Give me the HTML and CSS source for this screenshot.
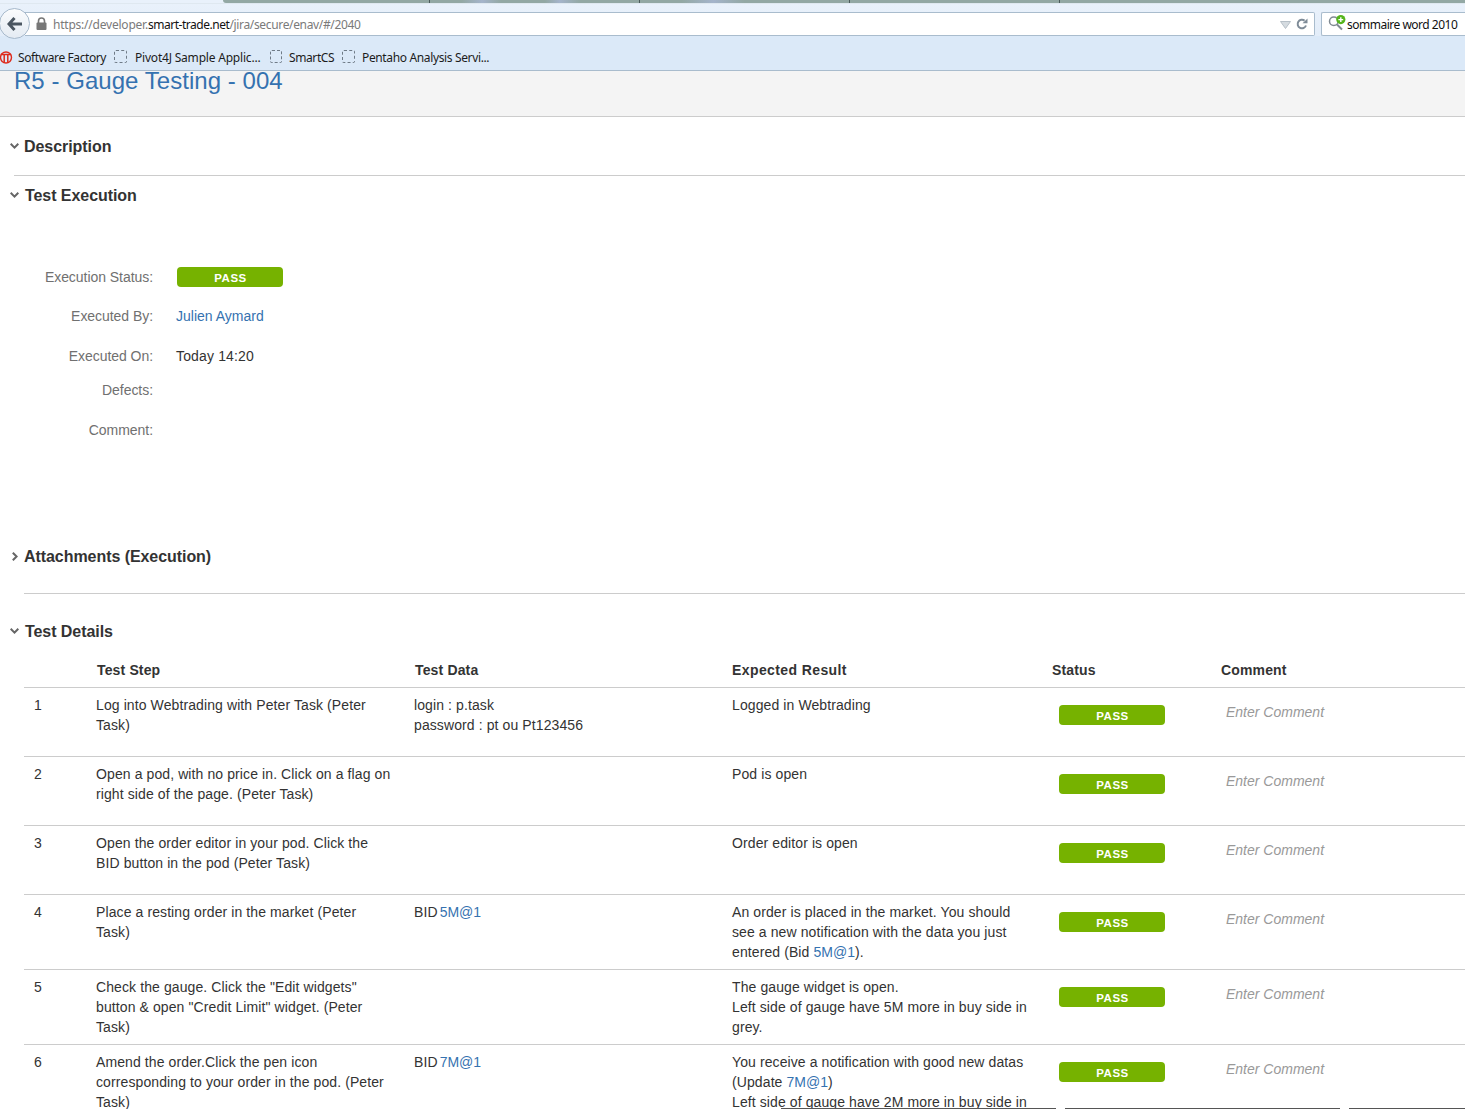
FILE: index.html
```html
<!DOCTYPE html>
<html lang="en">
<head>
<meta charset="utf-8">
<title>R5 - Gauge Testing - 004</title>
<link rel="stylesheet" href="styles.css">
</head>
<body>
<div class="chrome">
  <div class="tabstrip">
    <div class="tab tab-first"></div><div class="tab tab-glass-a"></div><div class="tab tab-glass-b"></div><div class="tab"></div><div class="tab tab-last"></div>
  </div>
  <div class="toolbar">
    <div class="back">
      <svg width="16" height="14" viewBox="0 0 16 14"><path d="M7.5 1 2 7l5.5 6M2.5 7H15" fill="none" stroke="#4b5661" stroke-width="3"/></svg>
    </div>
    <div class="urlbar">
      <svg class="lock" width="11" height="13" viewBox="0 0 11 13"><path d="M2.5 6V4a3 3 0 0 1 6 0v2" fill="none" stroke="#777" stroke-width="1.6"/><rect x="0.5" y="5.5" width="10" height="7.5" rx="1" fill="#777"/></svg>
      <span class="url"><span class="url-pre">https://developer.</span><b class="domain">smart-trade.net</b>/jira/secure/enav/#/2040</span>
      <svg class="drop" width="11" height="8" viewBox="0 0 11 8"><path d="M.5.5h10l-5 7z" fill="#d5dbe0" stroke="#b6bfc7"/></svg>
      <svg class="reload" width="12" height="12" viewBox="0 0 12 12"><path d="M10 7.5A4.3 4.3 0 1 1 8.6 2.6" fill="none" stroke="#7e8b97" stroke-width="2"/><path d="M6.5 5.2h5V.4z" fill="#7e8b97"/></svg>
    </div>
    <div class="searchbar">
      <svg class="glass" width="18" height="16" viewBox="0 0 18 16"><circle cx="5.8" cy="6.2" r="4.3" fill="none" stroke="#808a92" stroke-width="1.5"/><path d="m9 9.5 5 5" stroke="#808a92" stroke-width="2"/><circle cx="12.8" cy="4.6" r="4.6" fill="#55b51c"/><path d="M12.8 2.2v4.8M10.4 4.6h4.8" stroke="#fff" stroke-width="1.4"/></svg>
      <span class="search-text">sommaire word 2010</span>
    </div>
  </div>
  <div class="bookmarks">
    <svg class="sf" width="13" height="13" viewBox="0 0 13 13"><circle cx="6" cy="6.5" r="5.5" fill="none" stroke="#dd2a1c" stroke-width="1.4"/><path d="M.8 3.6h10.4M4.2 3.6V12M7.8 3.6V12" fill="none" stroke="#dd2a1c" stroke-width="1.5"/></svg>
    <span class="bm bm-sf">Software Factory</span>
    <i class="bbox"></i><span class="bm bm-p">Pivot4J Sample Applic...</span>
    <i class="bbox bbox-n"></i><span class="bm bm-s">SmartCS</span>
    <i class="bbox bbox-m"></i><span class="bm bm-l">Pentaho Analysis Servi...</span>
  </div>
</div>

<main class="page">
  <header class="issue-head"><h1 class="issue-title">R5 - Gauge Testing - 004</h1></header>

  <section class="sec sec-desc">
    <h2 class="sec-h"><svg class="chev" width="9" height="6" viewBox="0 0 9 6"><path d="m.7.8 3.8 3.8L8.3.8" fill="none" stroke="#666" stroke-width="2"/></svg><span class="sec-t">Description</span></h2>
  </section>

  <section class="sec sec-exec">
    <h2 class="sec-h sec-h-alt"><svg class="chev" width="9" height="6" viewBox="0 0 9 6"><path d="m.7.8 3.8 3.8L8.3.8" fill="none" stroke="#666" stroke-width="2"/></svg><span class="sec-t">Test Execution</span></h2>
    <div class="fields">
      <div class="field f39"><span class="lbl">Execution Status:</span><span class="pill">PASS</span></div>
      <div class="field f40"><span class="lbl">Executed By:</span><a class="lnk val">Julien Aymard</a></div>
      <div class="field f34"><span class="lbl">Executed On:</span><span class="val val-date">Today 14:20</span></div>
      <div class="field f40"><span class="lbl">Defects:</span></div>
      <div class="field"><span class="lbl">Comment:</span></div>
    </div>
  </section>

  <section class="sec sec-att">
    <h2 class="sec-h"><svg class="chev chev-r" width="6" height="9" viewBox="0 0 6 9"><path d="m.8.7 3.8 3.8L.8 8.3" fill="none" stroke="#666" stroke-width="2"/></svg><span class="sec-t">Attachments (Execution)</span></h2>
  </section>

  <section class="sec sec-details">
    <h2 class="sec-h sec-h-alt"><svg class="chev" width="9" height="6" viewBox="0 0 9 6"><path d="m.7.8 3.8 3.8L8.3.8" fill="none" stroke="#666" stroke-width="2"/></svg><span class="sec-t">Test Details</span></h2>
    <table class="steps">
      <colgroup><col class="c-n"><col class="c-step"><col class="c-data"><col class="c-exp"><col class="c-st"><col class="c-com"></colgroup>
      <thead>
        <tr><th></th><th class="th-off">Test Step</th><th class="th-off">Test Data</th><th class="th-wide">Expected Result</th><th>Status</th><th>Comment</th></tr>
      </thead>
      <tbody>
        <tr><td>1</td><td>Log into Webtrading with Peter Task (Peter Task)</td><td>login : p.task<br>password : pt ou Pt123456</td><td>Logged in Webtrading</td><td><span class="pill pill-row">PASS</span></td><td><span class="ph">Enter Comment</span></td></tr>
        <tr><td>2</td><td>Open a pod, with no price in. Click on a flag on right side of the page. (Peter Task)</td><td></td><td>Pod is open</td><td><span class="pill pill-row">PASS</span></td><td><span class="ph">Enter Comment</span></td></tr>
        <tr><td>3</td><td>Open the order editor in your pod. Click the BID button in the pod (Peter Task)</td><td></td><td>Order editor is open</td><td><span class="pill pill-row">PASS</span></td><td><span class="ph">Enter Comment</span></td></tr>
        <tr><td>4</td><td>Place a resting order in the market (Peter Task)</td><td>BID <a class="lnk">5M@1</a></td><td>An order is placed in the market. You should see a new notification with the data you just entered (Bid <a class="lnk">5M@1</a>).</td><td><span class="pill pill-row">PASS</span></td><td><span class="ph">Enter Comment</span></td></tr>
        <tr><td>5</td><td>Check the gauge. Click the "Edit widgets" button &amp; open "Credit Limit" widget. (Peter Task)</td><td></td><td>The gauge widget is open.<br>Left side of gauge have 5M more in buy side in grey.</td><td><span class="pill pill-row">PASS</span></td><td><span class="ph">Enter Comment</span></td></tr>
        <tr><td>6</td><td>Amend the order.Click the pen icon corresponding to your order in the pod. (Peter Task)</td><td>BID <a class="lnk">7M@1</a></td><td>You receive a notification with good new datas (Update <a class="lnk">7M@1</a>)<br>Left side of gauge have 2M more in buy side in grey.</td><td><span class="pill pill-row">PASS</span></td><td><span class="ph">Enter Comment</span></td></tr>
      </tbody>
    </table>
  </section>
</main>

<div class="edge-lines"><i class="edge e1"></i><i class="edge e2"></i><i class="edge e3"></i></div>
</body>
</html>
```
FILE: styles.css
```css
* { box-sizing: border-box; }
html, body { margin: 0; padding: 0; height: 1109px; overflow: hidden; background: #fff; }
body { position: relative; font-family: "Liberation Sans", Arial, sans-serif; font-size: 14px; line-height: 20px; color: #333; }

/* browser chrome */
.chrome { font-family: "Noto Sans", "Open Sans", sans-serif; font-size: 12px; color: #1c1c1c; }
.tabstrip { display: flex; height: 4px; padding-left: 223px; background: #e9f1fb; border-bottom: 1px solid #dfe8f0; }
.tab { width: 210px; height: 3px; background: #93a8a4; border-right: 1px solid #4a5a5a; }
.tab-first { width: 207px; border-bottom-left-radius: 5px; }
.tab-glass-a { background: linear-gradient(90deg, #93a8a4 15%, #a5b4cb 25%, #93a8a4 34%, #93a8a4 55%, #a5b4cb 62%, #93a8a4 72%); }
.tab-glass-b { background: linear-gradient(90deg, #93a8a4 20%, #a5b4cb 35%, #93a8a4 50%); }
.tab-last { flex: 1; border-right: 0; }
.toolbar { position: relative; display: flex; height: 32px; padding: 8px 0 0 25px; background: linear-gradient(#e9f1fb, #e3edf9); }
.back { position: absolute; left: -1px; top: 4px; width: 31px; height: 31px; display: flex; align-items: center; justify-content: center; border-radius: 50%; border: 1px solid #a7b9cb; background: linear-gradient(#fbfcfd, #e4ebf3); }
.urlbar { flex: 1; height: 24px; display: flex; align-items: center; background: #fff; border: 1px solid #a9bccd; border-left: 0; border-radius: 0 2px 2px 0; margin-right: 6px; padding-left: 11px; }
.lock { flex: none; margin-top: -1px; }
.url { margin-left: 6px; padding-top: 2px; flex: 1; color: #7a7a7a; letter-spacing: -0.34px; white-space: nowrap; }
.url-pre { letter-spacing: -0.22px; }
.domain { font-weight: 400; color: #111; letter-spacing: -0.47px; }
.drop { margin-right: 5px; margin-top: 1px; }
.reload { margin-right: 6px; }
.searchbar { width: 144px; height: 24px; display: flex; align-items: center; background: #fff; border: 1px solid #a9bccd; border-right: 0; border-radius: 2px 0 0 2px; padding-left: 6px; }
.glass { flex: none; margin-right: 1px; margin-top: -2px; }
.search-text { padding-top: 2px; white-space: nowrap; letter-spacing: -0.5px; color: #111; }
.bookmarks { display: flex; align-items: center; height: 35px; padding-top: 8px; background: #dbe9f8; border-bottom: 1px solid #a9bccd; }
.sf { flex: none; margin-right: 5px; }
.bm { padding-top: 2px; white-space: nowrap; }
.bm-sf { width: 88px; margin-right: 8px; letter-spacing: -0.4px; }
.bm-p { width: 125px; margin-right: 10px; letter-spacing: -0.2px; }
.bm-s { width: 45px; margin-right: 8px; letter-spacing: -0.4px; }
.bm-l { letter-spacing: -0.36px; }
.bbox { flex: none; width: 13px; height: 13px; margin-right: 8px; margin-top: -1px; border: 1px dashed #6f7b87; border-radius: 2px; }
.bbox-n { width: 12px; margin-right: 7px; }
.bbox-m { margin-right: 7px; }

/* page */
.issue-head { height: 46px; background: #f4f4f4; border-bottom: 1px solid #ccc; padding-left: 14px; }
.issue-title { margin: 0; font-size: 24px; font-weight: 400; line-height: 20px; letter-spacing: 0.04px; color: #3572b0; }
.sec-h { display: flex; align-items: center; margin: 0; height: 20px; padding-left: 10px; font-size: 16px; line-height: 20px; font-weight: 700; letter-spacing: -0.06px; color: #333; }
.sec-t { padding-top: 2px; }
.chev { flex: none; margin-right: 5px; }
.sec-h-alt .chev { margin-right: 6px; }
.chev-r { margin-left: 2px; margin-right: 6px; }
.sec-desc { height: 59px; padding-top: 19px; }
.sec-desc::after { content: ""; display: block; height: 1px; margin: 19px 0 0 14px; background: #ccc; }
.sec-exec { padding-top: 9px; }
.fields { margin-top: 62px; }
.field { display: flex; height: 20px; }
.f39 { height: 39px; }
.f40 { height: 40px; }
.f34 { height: 34px; }
.lbl { width: 153px; text-align: right; color: #707070; letter-spacing: -0.05px; }
.val { margin-left: 23px; }
.val-date { letter-spacing: 0.15px; }
.lnk { color: #3572b0; }
.pill { display: block; width: 106px; height: 20px; margin-left: 24px; padding-left: 1px; background: #76b200; border-radius: 4px; color: #fff; font-size: 11.5px; font-weight: 700; line-height: 22px; letter-spacing: 0.5px; text-align: center; }
.sec-att { margin-top: 106px; }
.sec-att::after { content: ""; display: block; height: 1px; margin: 27px 0 0 24px; background: #ccc; }
.sec-details { margin-top: 27px; }
.steps { width: 1441px; margin-left: 24px; table-layout: fixed; border-collapse: separate; border-spacing: 0; }
.c-n { width: 62px; }
.c-step { width: 318px; }
.c-data { width: 318px; }
.c-exp { width: 320px; }
.c-st { width: 169px; }
.c-com { width: 254px; }
.steps th { height: 47px; padding: 0 10px 7px; text-align: left; vertical-align: bottom; font-weight: 700; color: #333; letter-spacing: 0.15px; border-bottom: 1px solid #ccc; }
.steps .th-off { padding-left: 11px; }
.steps .th-wide { letter-spacing: 0.4px; }
.steps td { height: 69px; padding: 7px 10px; vertical-align: top; border-bottom: 1px solid #ccc; color: #333; letter-spacing: 0.1px; }
.steps td:nth-child(2) { padding-right: 12px; }
.steps .lnk { letter-spacing: 0; }
.steps td:nth-child(3) .lnk { margin-left: -2px; }
.pill-row { margin: 10px 0 0 7px; }
.ph { display: block; margin: 7px 0 0 5px; font-style: italic; color: #999; letter-spacing: 0; }

/* cut-off window edge along the bottom of the capture */
.edge-lines { position: absolute; left: 0; right: 0; bottom: 0; height: 1px; }
.edge { position: absolute; top: 0; height: 1px; background: #555; }
.e1 { left: 781px; width: 275px; }
.e2 { left: 1065px; width: 275px; }
.e3 { left: 1349px; right: 0; }
```
